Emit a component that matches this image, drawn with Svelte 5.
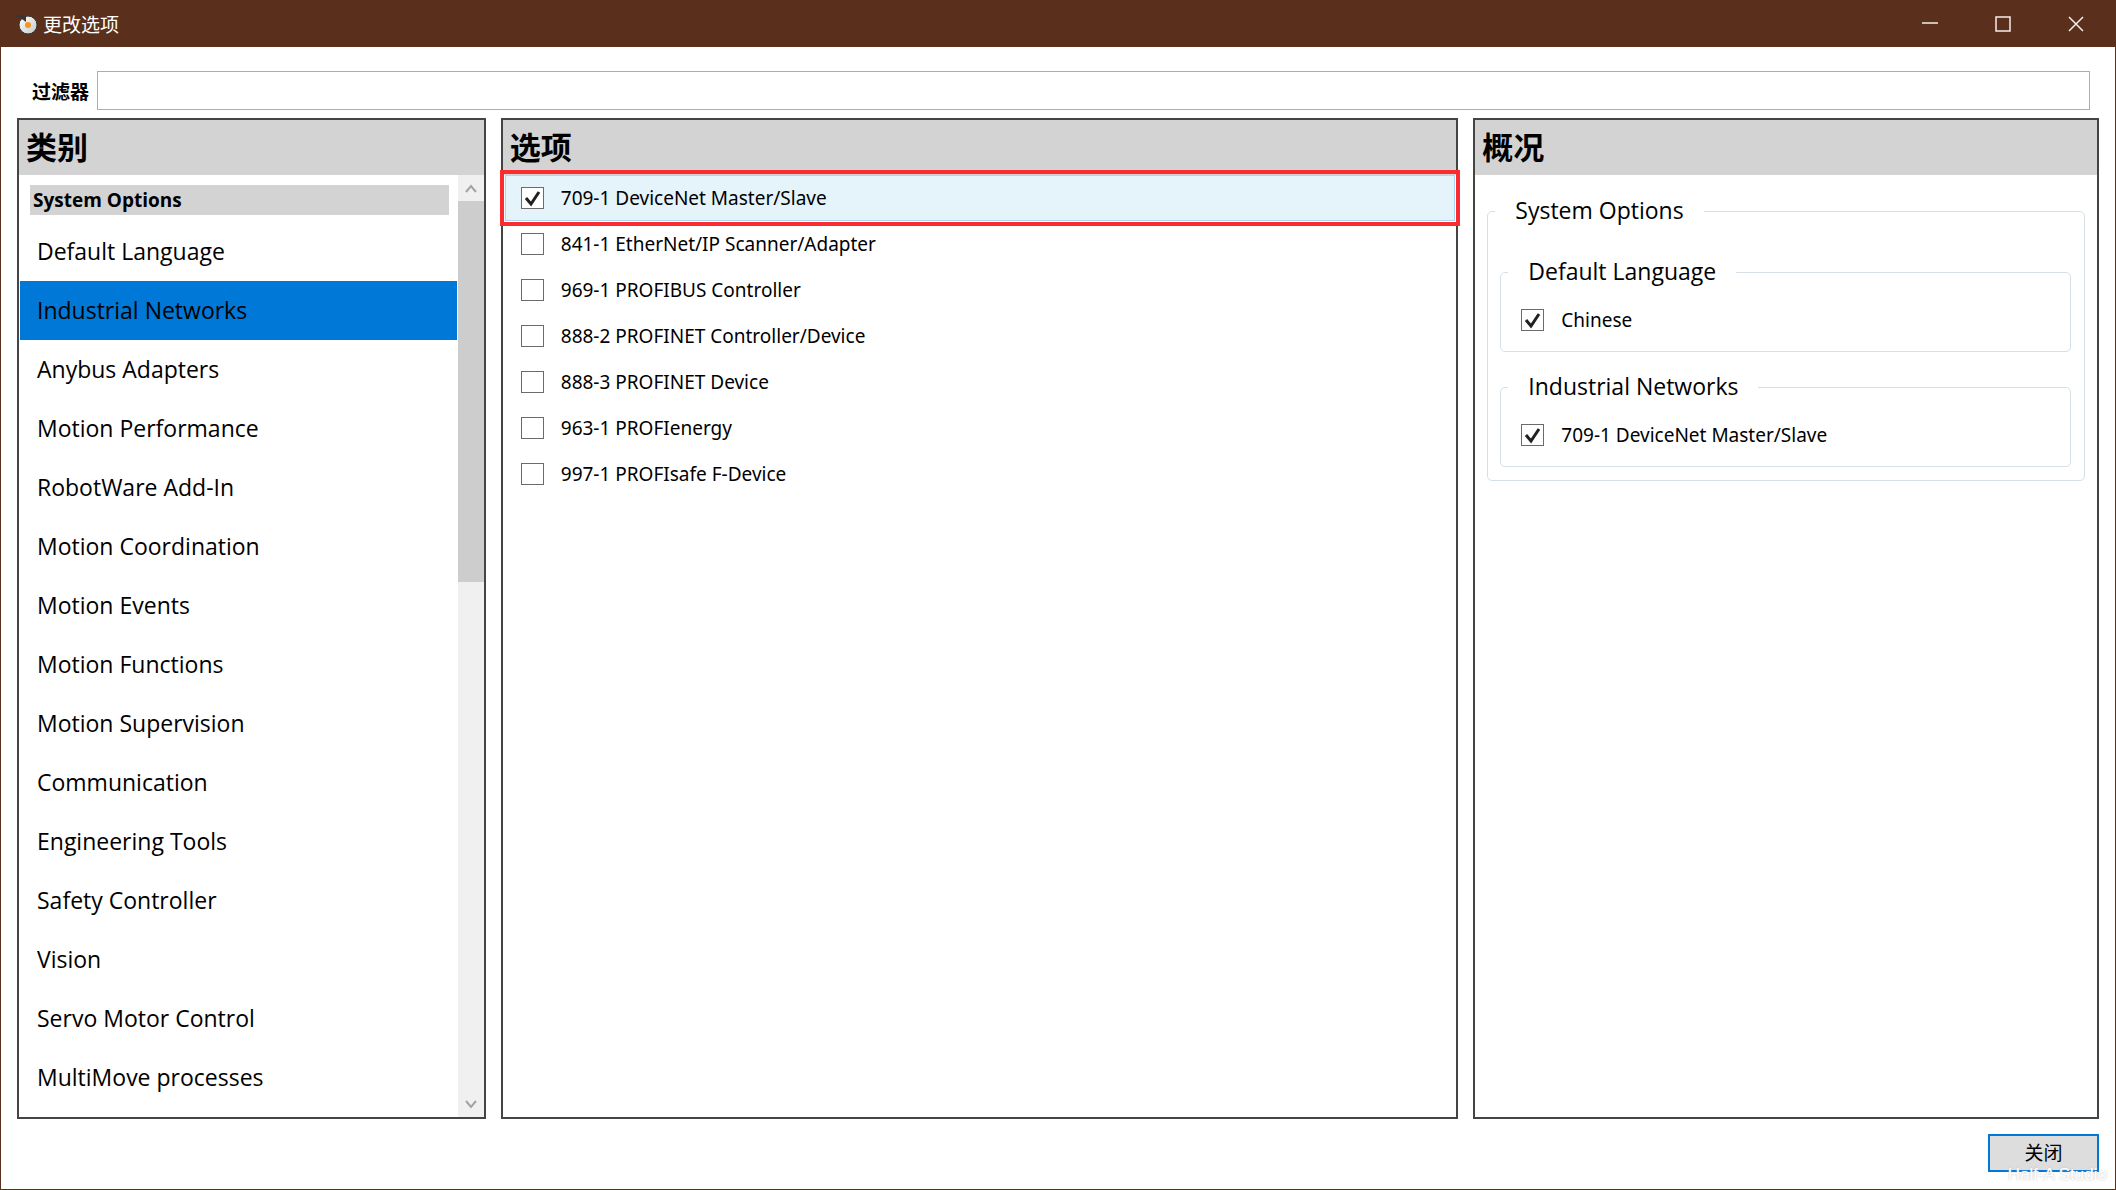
<script>
  let filter = $state("");
  let selected = $state("Industrial Networks");

  const categories = [
    "Default Language",
    "Industrial Networks",
    "Anybus Adapters",
    "Motion Performance",
    "RobotWare Add-In",
    "Motion Coordination",
    "Motion Events",
    "Motion Functions",
    "Motion Supervision",
    "Communication",
    "Engineering Tools",
    "Safety Controller",
    "Vision",
    "Servo Motor Control",
    "MultiMove processes",
  ];

  let options = $state([
    { name: "709-1 DeviceNet Master/Slave", checked: true },
    { name: "841-1 EtherNet/IP Scanner/Adapter", checked: false },
    { name: "969-1 PROFIBUS Controller", checked: false },
    { name: "888-2 PROFINET Controller/Device", checked: false },
    { name: "888-3 PROFINET Device", checked: false },
    { name: "963-1 PROFIenergy", checked: false },
    { name: "997-1 PROFIsafe F-Device", checked: false },
  ]);

  let chinese = $state(true);
</script>

<div class="window">
  <header class="titlebar">
    <svg class="logo" width="26" height="22" viewBox="0 0 26 22">
      <defs>
        <linearGradient id="disc" x1="0" y1="0" x2="1" y2="1">
          <stop offset="0" stop-color="#ffffff" />
          <stop offset="1" stop-color="#c4c8ca" />
        </linearGradient>
      </defs>
      <circle cx="16" cy="12" r="9" fill="url(#disc)" stroke="#3c3431" stroke-width="1" />
      <path d="M1 3 Q8 0 14 3 L14 9 Q8 4 1 3Z" fill="#3b3532" />
      <circle cx="16" cy="12" r="3" fill="#f7941d" />
    </svg>
    <span class="title">更改选项</span>
    <div class="window-buttons">
      <button aria-label="最小化">
        <svg width="16" height="16" viewBox="0 0 16 16"><path d="M0 7h16" /></svg>
      </button>
      <button aria-label="最大化">
        <svg width="16" height="16" viewBox="0 0 16 16"><path d="M1 1h14v14H1z" /></svg>
      </button>
      <button aria-label="关闭窗口">
        <svg width="16" height="16" viewBox="0 0 16 16"><path d="M1 1l14 14M15 1L1 15" /></svg>
      </button>
    </div>
  </header>

  <div class="filter">
    <label for="filter">过滤器</label>
    <input id="filter" type="text" bind:value={filter} />
  </div>

  <main class="panels">
    <section class="panel">
      <h2>类别</h2>
      <div class="category-body">
        <div class="category-list">
          <h3>System Options</h3>
          {#each categories as category}
            <button
              class="category"
              class:selected={category === selected}
              onclick={() => (selected = category)}>{category}</button>
          {/each}
        </div>
        <div class="scrollbar">
          <button aria-label="向上滚动">
            <svg width="12" height="10" viewBox="0 0 12 10"><path d="M1 9l5-6 5 6" /></svg>
          </button>
          <div class="track"><div class="thumb"></div></div>
          <button aria-label="向下滚动">
            <svg width="12" height="10" viewBox="0 0 12 10"><path d="M1 2l5 6 5-6" /></svg>
          </button>
        </div>
      </div>
    </section>

    <section class="panel">
      <h2>选项</h2>
      <div class="option-list">
        {#each options as option, i}
          <label class="check option" class:active={i === 0}>
            <input type="checkbox" bind:checked={option.checked} />
            <span>{option.name}</span>
          </label>
        {/each}
      </div>
    </section>

    <section class="panel">
      <h2>概况</h2>
      <div class="summary">
        <fieldset class="outer">
          <legend>System Options</legend>
          <fieldset class="inner">
            <legend>Default Language</legend>
            <label class="check">
              <input type="checkbox" bind:checked={chinese} />
              <span>Chinese</span>
            </label>
          </fieldset>
          <fieldset class="inner">
            <legend>Industrial Networks</legend>
            {#each options.filter((o) => o.checked) as option}
              <label class="check">
                <input type="checkbox" bind:checked={option.checked} />
                <span>{option.name}</span>
              </label>
            {/each}
          </fieldset>
        </fieldset>
      </div>
    </section>
  </main>

  <footer>
    <button class="close">关闭</button>
    <span class="watermark">Half-A Studio</span>
  </footer>
</div>

<style>
  :global(body) {
    margin: 0;
  }

  .window {
    display: flex;
    flex-direction: column;
    box-sizing: border-box;
    min-height: 100vh;
    border: 1px solid #5a301c;
    background: #fff;
    color: #000;
    font-family: "Open Sans", "Noto Sans CJK SC", sans-serif;
    font-size: 19px;
  }

  button {
    padding: 0;
    border: 0;
    background: none;
    color: inherit;
    font: inherit;
  }

  svg {
    display: block;
  }

  /* title bar */
  .titlebar {
    display: flex;
    align-items: center;
    height: 46px;
    padding: 0 3px 0 11px;
    background: #5a301c;
    color: #fff;
  }

  .title {
    margin-left: 5px;
  }

  .window-buttons {
    display: flex;
    height: 100%;
    margin-left: auto;
  }

  .window-buttons button {
    display: flex;
    align-items: center;
    justify-content: center;
    width: 73px;
  }

  .window-buttons path {
    fill: none;
    stroke: #f3eeec;
    stroke-width: 1.5;
  }

  /* filter row */
  .filter {
    display: flex;
    align-items: center;
    gap: 8px;
    padding: 24px 25px 8px 31px;
  }

  .filter label {
    font-weight: bold;
  }

  .filter input {
    flex: 1;
    box-sizing: border-box;
    height: 39px;
    padding: 0 8px;
    border: 1px solid #abadb3;
    font: inherit;
  }

  /* three columns */
  .panels {
    flex: 1;
    display: grid;
    grid-template-columns: 469fr 958fr 626fr;
    gap: 15px;
    padding: 0 16px;
  }

  .panel {
    display: flex;
    flex-direction: column;
    min-width: 0;
    border: 2px solid #444;
  }

  h2 {
    margin: 0;
    padding-left: 7px;
    background: #d3d3d3;
    font-size: 31px;
    line-height: 55px;
  }

  .category-body {
    flex: 1;
    display: flex;
  }

  .category-list {
    flex: 1;
    display: flex;
    flex-direction: column;
    padding: 10px 1px 0;
  }

  h3 {
    margin: 0 8px 7px 10px;
    padding-left: 3px;
    background: #d3d3d3;
    font-size: 19px;
    line-height: 30px;
  }

  .category {
    padding-left: 17px;
    font-size: 23px;
    line-height: 59px;
    text-align: left;
  }

  .category.selected {
    background: #0078d7;
  }

  .scrollbar {
    display: flex;
    flex-direction: column;
    width: 26px;
    background: #f0f0f0;
  }

  .scrollbar button {
    display: flex;
    align-items: center;
    justify-content: center;
    height: 26px;
  }

  .scrollbar path {
    fill: none;
    stroke: #a3a3a3;
    stroke-width: 2;
  }

  .track {
    flex: 1;
  }

  .thumb {
    height: 42.8%;
    background: #cdcdcd;
  }

  /* check boxes */
  .check {
    display: flex;
    align-items: center;
    gap: 17px;
    font-family: "Noto Sans", "Noto Sans CJK SC", sans-serif;
    font-size: 19px;
  }

  .check input {
    appearance: none;
    box-sizing: border-box;
    width: 23px;
    height: 22px;
    margin: 0;
    border: 1px solid #6b6b6b;
    background: #fff;
  }

  .check input:checked {
    background: #fff url("data:image/svg+xml,%3Csvg xmlns='http://www.w3.org/2000/svg' viewBox='0 0 21 20'%3E%3Cpath d='M4 10l5 6L17 4' fill='none' stroke='%23212121' stroke-width='3'/%3E%3C/svg%3E") center / 100% 100%;
  }

  .option-list {
    padding: 0 1px 0 2px;
  }

  .option {
    box-sizing: border-box;
    height: 46px;
    padding-left: 16px;
  }

  .option.active {
    border: 1px solid #a9d9f2;
    padding-left: 15px;
    background: #e5f3fb;
    outline: 4px solid #fb2c2f;
    outline-offset: 1px;
  }

  /* summary */
  .summary {
    padding: 20px 12px;
  }

  fieldset {
    min-width: 0;
    margin: 0;
    padding: 0;
    border: 1px solid #d5dfe5;
    border-radius: 5px;
  }

  legend {
    margin-left: 7px;
    padding: 0 20px;
    font-size: 23px;
    line-height: 30px;
    padding-bottom: 2px;
  }

  .outer {
    padding: 29px 0 13px;
  }

  .inner {
    margin: 0 13px 0 12px;
  }

  .inner + .inner {
    margin-top: 19px;
  }

  .inner .check {
    height: 63px;
    padding-left: 20px;
  }

  /* bottom bar */
  footer {
    position: relative;
    display: flex;
    justify-content: flex-end;
    padding: 15px 16px 17px;
  }

  .close {
    box-sizing: border-box;
    width: 111px;
    height: 38px;
    border: 2px solid #0078d7;
    background: #ddd;
    line-height: 32px;
  }

  .watermark {
    position: absolute;
    right: 8px;
    bottom: 4px;
    color: #fff;
    font-family: "Liberation Sans", sans-serif;
    font-size: 17px;
    line-height: 20px;
    text-shadow: 0 0 2px #bbb;
    pointer-events: none;
  }
</style>
